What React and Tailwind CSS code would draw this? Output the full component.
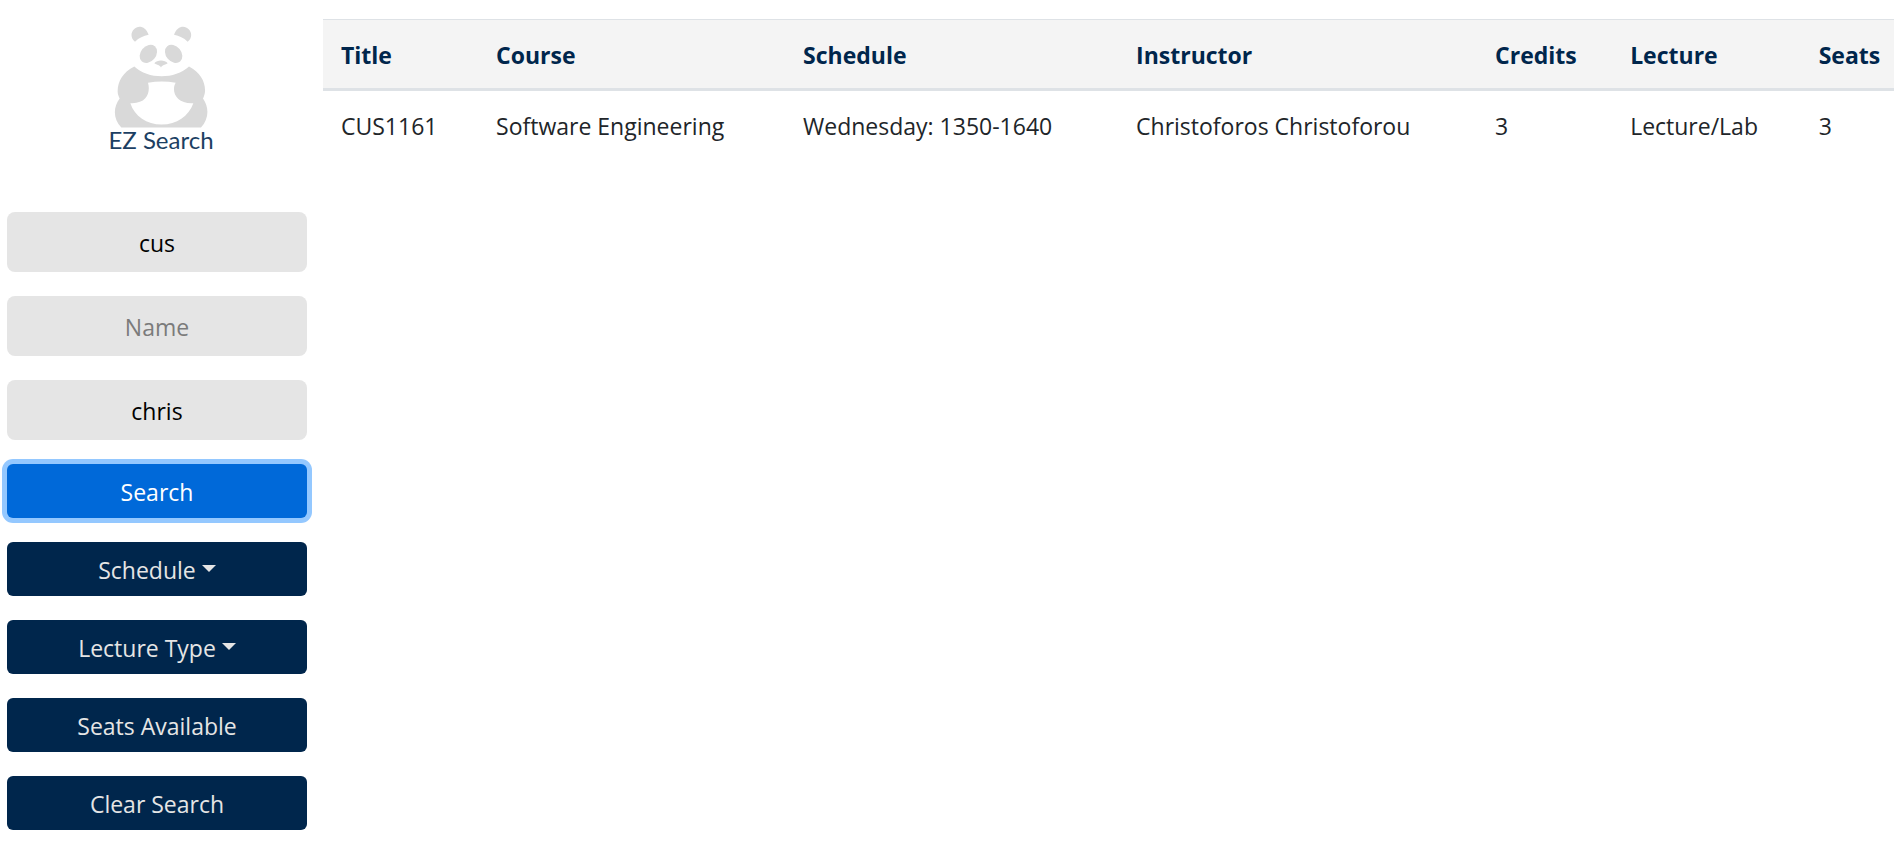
const COLUMNS = [
  { key: "title", label: "Title", width: "w-[9.87%]" },
  { key: "course", label: "Course", width: "w-[19.54%]" },
  { key: "schedule", label: "Schedule", width: "w-[21.2%]" },
  { key: "instructor", label: "Instructor", width: "w-[22.85%]" },
  { key: "credits", label: "Credits", width: "w-[8.6%]" },
  { key: "lecture", label: "Lecture", width: "w-[12%]" },
  { key: "seats", label: "Seats", width: "w-[5.94%]" },
];

const ROWS = [
  {
    title: "CUS1161",
    course: "Software Engineering",
    schedule: "Wednesday: 1350-1640",
    instructor: "Christoforos Christoforou",
    credits: "3",
    lecture: "Lecture/Lab",
    seats: "3",
  },
];

function Logo() {
  return (
    <div className="flex flex-col items-center">
      <svg className="h-[102px] w-[94px]" viewBox="70 47 282 305" fill="#d9d9d9" aria-hidden="true">
        <path d="M133 94C120 84 119 67 130 56C142 43 165 46 174 73C158 76 145 82 133 94Z" />
        <path d="M291 94C304 84 305 67 294 56C282 43 259 46 250 73C266 76 279 82 291 94Z" />
        <ellipse cx="173" cy="130" rx="23" ry="30" transform="rotate(40 173 130)" />
        <ellipse cx="249" cy="130" rx="23" ry="30" transform="rotate(-40 249 130)" />
        <path d="M191 158C199 147 223 147 231 158C225 163 215 162 211 171C207 162 197 163 191 158Z" />
        <path
          fillRule="evenodd"
          d="M131 168C172 207 253 207 295 168C329 185 345 215 343 244C342 252 340 258 337 264C356 291 355 325 331 351H92C67 325 67 291 87 264C84 258 81 252 81 244C80 215 96 185 131 168ZM172 217C180 243 170 281 119 278C132 317 168 342 213 342C258 342 294 317 308 278C258 281 240 243 255 217C228 212 199 212 172 217Z"
        />
      </svg>
      <span className="font-[Lato,sans-serif] text-2xl leading-6 text-[#1c3f63]">EZ Search</span>
    </div>
  );
}

function SearchField({ label, defaultValue }) {
  return (
    <input
      type="text"
      aria-label={label}
      placeholder={label}
      defaultValue={defaultValue}
      className="h-[60px] w-full rounded-lg bg-[#e5e5e5] px-4 pt-0.5 text-center text-black outline-none placeholder:text-[#7b7b7b]"
    />
  );
}

function SideButton({ children, caret = false }) {
  return (
    <button
      type="button"
      className="flex h-[54px] w-full items-center justify-center gap-1.5 rounded-md bg-[#00264c] pt-0.5 text-[#e5e5e5]"
    >
      {children}
      {caret && (
        <svg className="mb-1 h-[7px] w-3.5" viewBox="0 0 14 7" fill="currentColor" aria-hidden="true">
          <path d="M0 0H14L7 7Z" />
        </svg>
      )}
    </button>
  );
}

export default function App() {
  return (
    <div className="flex min-h-screen bg-white font-['Open_Sans',sans-serif] text-[23px] leading-8 text-[#212529]">
      <aside className="w-[323px] shrink-0 pt-[26px] pr-4 pl-[7px]">
        <div className="pl-2">
          <Logo />
        </div>
        <form className="mt-[60px] flex flex-col gap-6" onSubmit={(e) => e.preventDefault()}>
          <SearchField label="Title" defaultValue="cus" />
          <SearchField label="Name" />
          <SearchField label="Instructor" defaultValue="chris" />
          <button
            type="submit"
            className="h-[54px] w-full rounded-md bg-[#0069d9] pt-0.5 text-white ring-5 ring-[#94c8ff]"
          >
            Search
          </button>
          <SideButton caret>Schedule</SideButton>
          <SideButton caret>Lecture Type</SideButton>
          <SideButton>Seats Available</SideButton>
          <SideButton>Clear Search</SideButton>
        </form>
      </aside>
      <main className="min-w-0 flex-1 pt-[19px]">
        <table className="w-full table-fixed border-separate border-spacing-0 text-left whitespace-nowrap">
          <thead className="bg-[#f4f4f4] text-[#00264c]">
            <tr>
              {COLUMNS.map((c) => (
                <th
                  key={c.key}
                  scope="col"
                  className={`${c.width} border-t border-b-3 border-t-[#dee2e6] border-b-[#dee2e6] pt-[19px] pb-[17px] pl-[18px] font-bold`}
                >
                  {c.label}
                </th>
              ))}
            </tr>
          </thead>
          <tbody>
            {ROWS.map((row) => (
              <tr key={row.title}>
                {COLUMNS.map((c) => (
                  <td key={c.key} className="pt-[19px] pb-[17px] pl-[18px]">
                    {row[c.key]}
                  </td>
                ))}
              </tr>
            ))}
          </tbody>
        </table>
      </main>
    </div>
  );
}
